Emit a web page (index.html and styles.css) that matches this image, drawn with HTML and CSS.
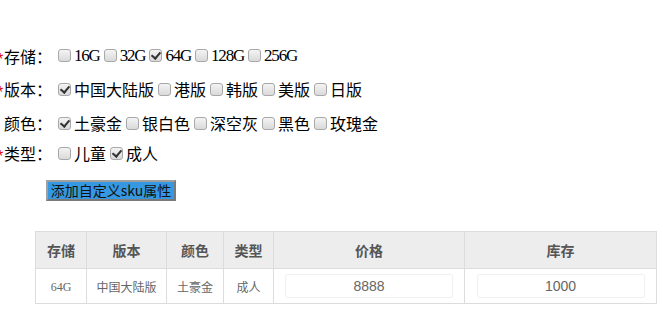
FILE: index.html
```html
<!DOCTYPE html>
<html lang="zh-CN">
<head>
<meta charset="utf-8">
<title>SKU</title>
<link rel="stylesheet" href="styles.css">
</head>
<body>
<div class="form">
  <div class="row">
    <span class="label"><span class="star">*</span>存储：</span>
    <label class="opt"><input type="checkbox"><span class="lat">16G</span></label>
    <label class="opt"><input type="checkbox"><span class="lat">32G</span></label>
    <label class="opt"><input type="checkbox" checked><span class="lat">64G</span></label>
    <label class="opt"><input type="checkbox"><span class="lat">128G</span></label>
    <label class="opt"><input type="checkbox"><span class="lat">256G</span></label>
  </div>
  <div class="row">
    <span class="label"><span class="star">*</span>版本：</span>
    <label class="opt"><input type="checkbox" checked>中国大陆版</label>
    <label class="opt"><input type="checkbox">港版</label>
    <label class="opt"><input type="checkbox">韩版</label>
    <label class="opt"><input type="checkbox">美版</label>
    <label class="opt"><input type="checkbox">日版</label>
  </div>
  <div class="row">
    <span class="label"><span class="star blank"></span>颜色：</span>
    <label class="opt"><input type="checkbox" checked>土豪金</label>
    <label class="opt"><input type="checkbox">银白色</label>
    <label class="opt"><input type="checkbox">深空灰</label>
    <label class="opt"><input type="checkbox">黑色</label>
    <label class="opt"><input type="checkbox">玫瑰金</label>
  </div>
  <div class="row short">
    <span class="label"><span class="star">*</span>类型：</span>
    <label class="opt"><input type="checkbox">儿童</label>
    <label class="opt"><input type="checkbox" checked>成人</label>
  </div>
  <div class="actions">
    <button class="add-btn" type="button">添加自定义sku属性</button>
  </div>
  <table class="sku">
    <thead>
      <tr>
        <th class="c1">存储</th>
        <th class="c2">版本</th>
        <th class="c3">颜色</th>
        <th class="c4">类型</th>
        <th class="c5">价格</th>
        <th class="c6">库存</th>
      </tr>
    </thead>
    <tbody>
      <tr>
        <td><span class="lat-s">64G</span></td>
        <td>中国大陆版</td>
        <td>土豪金</td>
        <td>成人</td>
        <td><input class="cell-input" type="text" value="8888"></td>
        <td><input class="cell-input" type="text" value="1000"></td>
      </tr>
    </tbody>
  </table>
</div>
</body>
</html>
```

FILE: styles.css
```css
html, body {
  margin: 0;
  padding: 0;
  background: #fff;
}
body {
  font-family: "Noto Sans CJK SC", "Liberation Sans", sans-serif;
  color: #000;
  overflow: hidden;
}
.form {
  padding-top: 39px;
}
.row {
  display: flex;
  align-items: center;
  height: 34px;
  font-size: 16px;
  line-height: 20px;
}
.row:first-child {
  height: 33px;
}
.row.short {
  height: 26px;
}
.label {
  display: flex;
  align-items: center;
  width: 58px;
  flex: none;
}
.star {
  display: inline-block;
  flex: none;
  width: 7px;
  margin-left: -3px;
  color: #e00000;
  font-family: "Liberation Sans", sans-serif;
  font-size: 16px;
  line-height: 14px;
  position: relative;
  top: 4px;
}
.opt {
  display: flex;
  align-items: center;
  margin-right: 4px;
  white-space: nowrap;
}
.lat {
  font-family: "Liberation Serif", serif;
  font-size: 17px;
  letter-spacing: -1.2px;
}
.opt input {
  -webkit-appearance: none;
  appearance: none;
  width: 13px;
  height: 13px;
  margin: 0 3px 0 0;
  border: 1px solid #a8a8a8;
  border-radius: 3px;
  background: linear-gradient(#f4f4f4, #d9d9d9);
  position: relative;
  flex: none;
}
.opt input:checked::after {
  content: "";
  position: absolute;
  left: 3px;
  top: 0px;
  width: 4px;
  height: 7px;
  border: solid #333;
  border-width: 0 2px 2px 0;
  transform: rotate(40deg);
}
.actions {
  padding: 11px 0 0 46px;
}
.add-btn {
  width: 130px;
  height: 21px;
  padding: 0;
  font-family: "Noto Sans CJK SC", "Liberation Sans", sans-serif;
  font-size: 14px;
  line-height: 17px;
  color: #111;
  background: #3698e0;
  border: 2px solid;
  border-color: #a0a0a0 #7a7a7a #7a7a7a #a0a0a0;
  border-radius: 0;
}
.sku {
  margin: 30px 0 0 35px;
  width: 621px;
  table-layout: fixed;
  border-collapse: collapse;
  font-size: 12px;
  color: #666;
}
.sku th, .sku td {
  border: 1px solid #dcdcdc;
  text-align: center;
  padding: 0;
}
.sku th {
  height: 36px;
  background: #ededed;
  font-size: 14px;
  font-weight: bold;
  color: #555;
}
.sku td {
  height: 34px;
}
.c1 { width: 50px; }
.c2 { width: 79px; }
.c3 { width: 56px; }
.c4 { width: 49px; }
.c5 { width: 190px; }
.c6 { width: 191px; }
.lat-s {
  font-family: "Liberation Serif", serif;
  font-size: 12px;
}
.cell-input {
  display: block;
  box-sizing: border-box;
  width: 168px;
  height: 24px;
  margin: 0 auto;
  border: 1px solid #f0f0f0;
  border-radius: 3px;
  text-align: center;
  font-family: "Liberation Sans", Arial, sans-serif;
  font-size: 14px;
  color: #666;
  background: #fff;
  outline: none;
}
```
